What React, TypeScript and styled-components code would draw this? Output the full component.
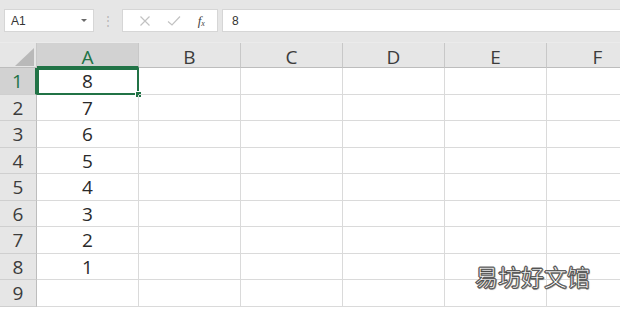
import * as React from "react";
import styled, { createGlobalStyle } from "styled-components";

const GlobalStyle = createGlobalStyle`
  html, body {
    margin: 0;
    padding: 0;
    background: #ffffff;
    overflow: hidden;
  }
  body {
    font-family: "Open Sans", "Noto Sans", "Noto Sans CJK SC", sans-serif;
  }
`;

const columns = ["A", "B", "C", "D", "E", "F"];
const values = ["8", "7", "6", "5", "4", "3", "2", "1", ""];
const rowHeights = [27, 26, 27, 26, 27, 26, 27, 26, 27];

const App: React.FC = () => {
  return (
    <>
      <GlobalStyle />
      <Sheet>
        <Toolbar>
          <NameBox>
            <NameText>A1</NameText>
            <DropArrow />
          </NameBox>
          <Grip>⋮</Grip>
          <FxButtons>
            <svg width="12" height="12" viewBox="0 0 12 12">
              <path d="M1.5 1.5 L10.5 10.5 M10.5 1.5 L1.5 10.5" stroke="#c2c2c2" strokeWidth="1.2" />
            </svg>
            <svg width="14" height="12" viewBox="0 0 14 12">
              <path d="M1 6.5 L5 10 L13 1.5" stroke="#c2c2c2" strokeWidth="1.2" fill="none" />
            </svg>
            <FxLabel>
              f<sub>x</sub>
            </FxLabel>
          </FxButtons>
          <FormulaInput>8</FormulaInput>
        </Toolbar>
        <GridWrap>
          <Grid $rows={rowHeights}>
            <Corner>
              <svg width="19" height="18" viewBox="0 0 19 18">
                <polygon points="19,0 19,18 0,18" fill="#b9b9b9" />
              </svg>
            </Corner>
            {columns.map((c, i) => (
              <ColHeader key={c} $active={i === 0}>
                {c}
              </ColHeader>
            ))}
            {values.map((v, r) => (
              <React.Fragment key={r}>
                <RowHeader $active={r === 0}>{r + 1}</RowHeader>
                {columns.map((c, i) => (
                  <Cell key={c} $selected={r === 0 && i === 0}>
                    {i === 0 ? v : ""}
                    {r === 0 && i === 0 && <FillHandle />}
                  </Cell>
                ))}
              </React.Fragment>
            ))}
          </Grid>
          <Watermark>易坊好文馆</Watermark>
        </GridWrap>
      </Sheet>
    </>
  );
};

const Sheet = styled.div`
  width: 620px;
  height: 309px;
  overflow: hidden;
  display: flex;
  flex-direction: column;
  background: #ffffff;
`;

const Toolbar = styled.div`
  height: 43px;
  box-sizing: border-box;
  background: #e6e6e6;
  display: flex;
  align-items: center;
  padding: 0 0 1px 4px;
  border-bottom: 1px solid #ebebeb;
`;

const NameBox = styled.div`
  width: 90px;
  height: 23px;
  box-sizing: border-box;
  background: #ffffff;
  border: 1px solid #d6d6d6;
  display: flex;
  align-items: center;
  justify-content: space-between;
  padding: 0 6px 0 6px;
`;

const NameText = styled.span`
  font-family: "Liberation Sans", Arial, sans-serif;
  font-size: 12px;
  color: #333333;
`;

const DropArrow = styled.span`
  width: 0;
  height: 0;
  border-left: 3px solid transparent;
  border-right: 3px solid transparent;
  border-top: 3px solid #6a6a6a;
`;

const Grip = styled.span`
  width: 28px;
  text-align: center;
  color: #b5b5b5;
  font-size: 12px;
  line-height: 1;
`;

const FxButtons = styled.div`
  width: 96px;
  height: 23px;
  box-sizing: border-box;
  background: #ffffff;
  border: 1px solid #d6d6d6;
  display: flex;
  align-items: center;
  justify-content: space-around;
  padding: 0 4px 0 8px;
`;

const FxLabel = styled.span`
  font-family: "Liberation Serif", "Times New Roman", serif;
  font-style: italic;
  font-size: 13px;
  color: #444444;
  sub {
    font-size: 8px;
    vertical-align: -1px;
  }
`;

const FormulaInput = styled.div`
  flex: 1;
  height: 23px;
  margin-left: 4px;
  box-sizing: border-box;
  background: #ffffff;
  border: 1px solid #d6d6d6;
  border-right: none;
  display: flex;
  align-items: center;
  padding-left: 9px;
  font-family: "Liberation Sans", Arial, sans-serif;
  font-size: 12px;
  color: #333333;
`;

const GridWrap = styled.div`
  position: relative;
  flex: 1;
`;

const Grid = styled.div<{ $rows: number[] }>`
  display: grid;
  grid-template-columns: 37px repeat(6, 102px);
  grid-template-rows: 25px ${(p) => p.$rows.map((h) => `${h}px`).join(" ")};
  font-size: 19px;
`;

const Corner = styled.div`
  background: #e6e6e6;
  border-right: 1px solid #c8c8c8;
  border-bottom: 1px solid #bdbdbd;
  box-sizing: border-box;
  display: flex;
  align-items: flex-end;
  justify-content: flex-end;
  padding: 0 2px 1px 0;
`;

const ColHeader = styled.div<{ $active?: boolean }>`
  box-sizing: border-box;
  background: ${(p) => (p.$active ? "#d2d2d2" : "#e6e6e6")};
  border-right: 1px solid #c8c8c8;
  border-bottom: ${(p) => (p.$active ? "2px solid #217346" : "1px solid #bdbdbd")};
  color: ${(p) => (p.$active ? "#217346" : "#3c3c3c")};
  display: flex;
  align-items: center;
  justify-content: center;
  padding-top: ${(p) => (p.$active ? "4px" : "3px")};
`;

const RowHeader = styled.div<{ $active?: boolean }>`
  box-sizing: border-box;
  background: ${(p) => (p.$active ? "#d2d2d2" : "#e6e6e6")};
  border-right: ${(p) => (p.$active ? "2px solid #217346" : "1px solid #bdbdbd")};
  border-bottom: 1px solid #cfcfcf;
  color: ${(p) => (p.$active ? "#217346" : "#3c3c3c")};
  display: flex;
  align-items: center;
  justify-content: center;
`;

const Cell = styled.div<{ $selected?: boolean }>`
  position: relative;
  box-sizing: border-box;
  border-right: 1px solid #dadada;
  border-bottom: 1px solid #dadada;
  display: flex;
  align-items: center;
  justify-content: center;
  color: #2a2a2a;
  ${(p) => (p.$selected ? "outline: 2px solid #217346; outline-offset: -2px;" : "")}
`;

const FillHandle = styled.span`
  position: absolute;
  right: -4px;
  bottom: -4px;
  width: 5px;
  height: 5px;
  background: #217346;
  border: 1px solid #ffffff;
`;

const Watermark = styled.div`
  position: absolute;
  left: 475px;
  top: 216px;
  font-family: "Noto Sans CJK SC", sans-serif;
  font-size: 23px;
  color: #ffffff;
  -webkit-text-stroke: 0.6px #3a3a3a;
  text-shadow:
    1px 0 0 #6a6a6a,
    -1px 0 0 #6a6a6a,
    0 1px 0 #6a6a6a,
    0 -1px 0 #6a6a6a,
    1px 1px 1px #8a8a8a;
`;

export default App;
